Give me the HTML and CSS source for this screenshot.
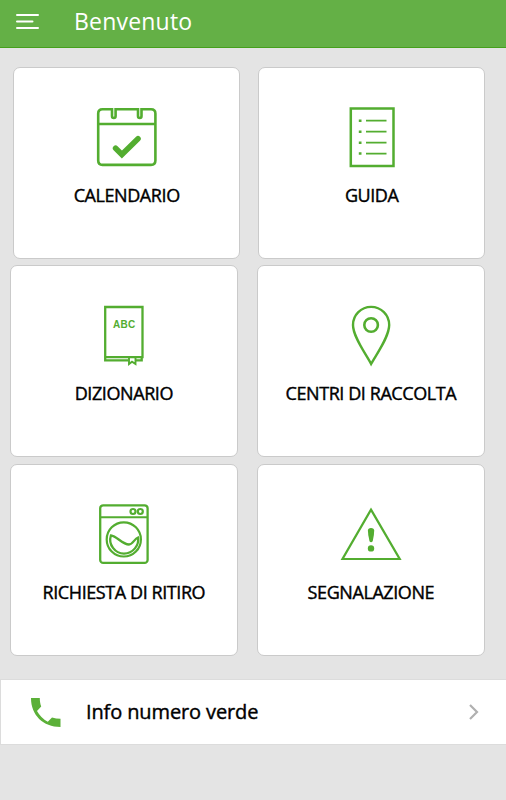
FILE: index.html
```html
<!DOCTYPE html>
<html lang="it">
<head>
<meta charset="utf-8">
<title>Benvenuto</title>
<link rel="stylesheet" href="styles.css">
</head>
<body>
<header class="bar">
  <svg class="menu" width="24" height="20" viewBox="15 11 24 20"><path d="M17 15H38M17 21.4H32.5M17 28H38"/></svg>
  <h1>Benvenuto</h1>
</header>
<main>
  <div class="row first">
    <a class="card">
      <svg class="icon" viewBox="87 100 80 70"><path d="M112 109.3H102.500Q98.200 109.300 98.200 113.500V160.500Q98.200 164.900 102.500 164.900H151Q155.400 164.900 155.400 160.500V113.500Q155.400 109.300 151 109.300H141.500V116Q141.500 118 139.800 118Q138 118 138 116V109.300H115.600V116Q115.600 118 113.800 118Q112 118 112 116ZM98.200 124H155.400" stroke-width="2.600"/><path d="M115.600 148.200L121.900 154.500L138 138.700" stroke-width="5.600" stroke-linecap="round"/></svg>
      <span>CALENDARIO</span>
    </a>
    <a class="card">
      <svg class="icon" viewBox="331.500 100 80 70"><path d="M350.300 108.500H393V166H350.300Z" stroke-width="2.500"/><path d="M365.500 120.700H386M365.500 131.700H386M365.500 142.700H386M365.500 153.600H386" stroke-width="1.800"/><path d="M358.300 120.700H361M358.300 131.700H361M358.300 142.700H361M358.300 153.600H361" stroke-width="2.500"/></svg>
      <span>GUIDA</span>
    </a>
  </div>
  <div class="row">
    <a class="card">
      <svg class="icon" viewBox="84 298 80 70"><path d="M105.200 307H142.500V357.200H105.200ZM105.200 357V360.300H128M135.500 360.300H141.700V357" stroke-width="2.300"/><path d="M129 357.500V364L132 361.700L135.500 364V357.500" stroke-width="1.900"/><text x="113" y="327.500">ABC</text></svg>
      <span>DIZIONARIO</span>
    </a>
    <a class="card">
      <svg class="icon" viewBox="331 298 80 70"><path d="M371.100 364C366 354 353 337 353 325A18.100 18.100 0 0 1 389.200 325C389.200 337 376.500 354 371.100 364Z" stroke-width="2.400"/><circle cx="371.100" cy="325" r="6.800" stroke-width="2.600"/></svg>
      <span>CENTRI DI RACCOLTA</span>
    </a>
  </div>
  <div class="row">
    <a class="card">
      <svg class="icon" viewBox="84 497 80 70"><rect x="100.200" y="505.300" width="47.400" height="57.600" rx="3" stroke-width="2.300"/><path d="M100 517.300H148" stroke-width="2"/><circle cx="133" cy="511.500" r="2.500" stroke-width="2.200"/><circle cx="140.300" cy="511.500" r="2.500" stroke-width="2.200"/><circle cx="123.800" cy="539.400" r="17.100" stroke-width="2.200"/><path d="M110.900 535.500C117 536 122 544.500 129 544.500C133 544.500 134.500 538.500 138 537.500C139.500 545 133 553.600 124 553.600C115 553.600 108 544.500 110.900 535.500Z" stroke-width="2.300"/></svg>
      <span>RICHIESTA DI RITIRO</span>
    </a>
    <a class="card">
      <svg class="icon" viewBox="331 497 80 70"><path d="M371 509.600L399.700 559H342.500Z" stroke-width="2.200"/><path class="solid" d="M367.900 530.500Q367.900 528 371 528T374.200 530.500Q374.200 535 372.700 541.300Q371 543 369.500 541.300Q367.900 535 367.900 530.500Z"/><circle class="solid" cx="371" cy="548.400" r="3.200"/></svg>
      <span>SEGNALAZIONE</span>
    </a>
  </div>
</main>
<a class="info">
  <svg class="phone" width="30" height="30" viewBox="0 -1 30 30"><path d="M0 0H8.800C8.800 3 9.200 5.700 10.200 8.500L6 13Q10.200 20.500 16.800 23.700L21 19.500Q25 20.800 29.500 20.800V29C12 29 0 17 0 0Z"/></svg>
  <span>Info numero verde</span>
  <svg class="chevron" width="12" height="18" viewBox="0 0 12 18"><path d="M2 2L9 9L2 16"/></svg>
</a>
</body>
</html>
```
FILE: styles.css
```css
* { box-sizing: border-box; }
body {
  margin: 0;
  min-height: 800px;
  background: #e4e4e4;
  color: #000;
  font-family: "Open Sans", sans-serif;
}
svg { display: block; flex: none; fill: none; }
.bar {
  display: flex;
  align-items: center;
  height: 48px;
  padding: 0 15px 5px;
  background: #64b046;
  border-bottom: 1px solid #45a01c;
  color: #fff;
}
.menu { stroke: #fff; stroke-width: 2; stroke-linecap: round; }
.bar h1 {
  margin: 0 0 0 35px;
  font-size: 23px;
  line-height: 32px;
  font-weight: 400;
  letter-spacing: .2px;
}
main {
  display: flex;
  flex-direction: column;
  gap: 6.500px;
  padding-top: 19px;
}
.row { display: flex; gap: 19.600px; padding-left: 10.200px; }
.row.first { gap: 17.600px; padding-left: 13px; }
.card {
  display: flex;
  flex-direction: column;
  align-items: center;
  width: 227.400px;
  height: 192px;
  padding-top: 32px;
  background: #fff;
  border: 1px solid #cacaca;
  border-radius: 7px;
}
.row.first .card { height: 191.500px; }
.icon { width: 80px; height: 70px; stroke: #53ad30; }
.icon .solid { fill: #53ad30; stroke: none; }
.icon text {
  fill: #53ad30;
  stroke: none;
  font: bold 10px "Liberation Sans", sans-serif;
  letter-spacing: .3px;
}
.card span {
  margin-top: 13px;
  font-size: 18px;
  line-height: 25px;
  letter-spacing: -.42px;
  white-space: nowrap;
  -webkit-text-stroke: .4px #000;
}
.info {
  display: flex;
  align-items: center;
  height: 66px;
  margin-top: 23.500px;
  padding: 0 26px 0 30px;
  background: #fff;
  border: 1px solid #dcdcdc;
  border-right: 0;
}
.phone { fill: #5bb038; }
.info span {
  flex: 1;
  margin-left: 25px;
  font-size: 20px;
  line-height: 28px;
  letter-spacing: -.12px;
  -webkit-text-stroke: .4px #000;
}
.chevron { stroke: #b0b0b0; stroke-width: 2.200; }
```
